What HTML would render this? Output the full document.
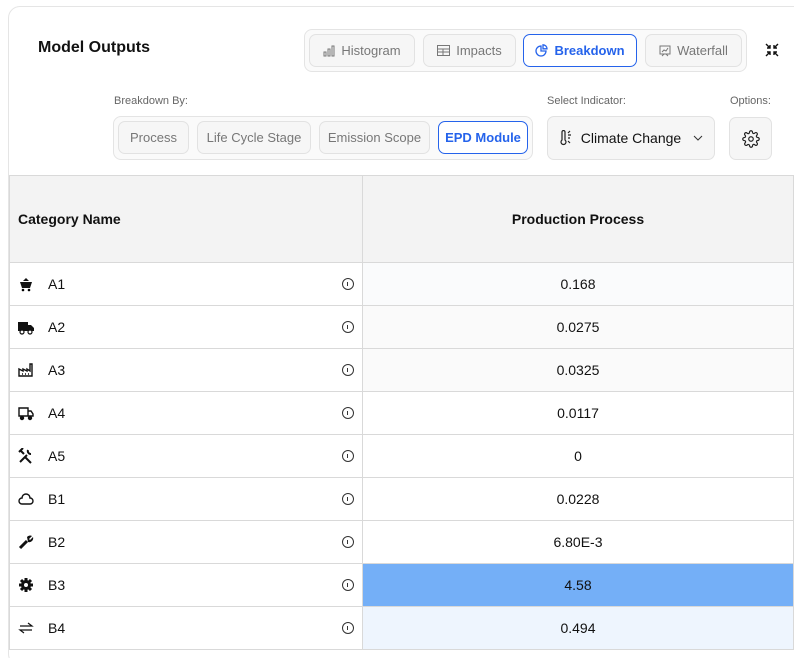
<!DOCTYPE html>
<html><head><meta charset="utf-8"><style>
*{box-sizing:border-box;margin:0;padding:0}
html,body{width:794px;height:658px;overflow:hidden}
body{background:#fff;font-family:"Liberation Sans",Arial,sans-serif;color:#111;position:relative}
.card{position:absolute;left:8px;top:6px;width:800px;height:660px;border:1px solid #e5e5e5;border-radius:12px}
.abs{position:absolute}
.title{left:38px;top:39px;font-size:16px;font-weight:bold}
.grp{border:1px solid #e4e4e4;border-radius:8px;background:#fafafa}
.btn{position:absolute;border:1px solid #e2e2e2;border-radius:7px;background:#f6f6f6;color:#777;font-size:13px;display:flex;align-items:center;justify-content:center;gap:6px}
.btn.act{border-color:#2563eb;background:#fff;color:#2563eb;font-weight:bold}
.lbl{font-size:11px;color:#666}
table{position:absolute;left:9px;top:175px;width:785px;border-collapse:collapse;font-size:14px}
td,th{border:1px solid #d9d9d9;height:43px;padding:0}
th{height:87px;background:#f3f3f3;font-weight:bold;font-size:14px}
th:first-child{text-align:left;padding-left:8px}
td:first-child{width:353px;padding-left:8px;position:relative}
td:first-child div{display:flex;align-items:center;height:42px}
td:last-child{text-align:center}
.ic{width:16px;height:16px;margin-right:14px}
.info{position:absolute;right:8px;top:15px;width:12px;height:12px;border:1.3px solid #333;border-radius:50%}
.info:after{content:"";position:absolute;left:4px;top:3px;width:1.3px;height:4px;background:#333}
</style></head><body>
<div class="card"></div>
<div class="abs title">Model Outputs</div>
<div class="abs grp" style="left:304px;top:29px;width:443px;height:43px"></div>
<div class="btn" style="left:309px;top:34px;width:106px;height:33px"><svg width="12" height="12" viewBox="0 0 12 12" fill="none" stroke="#777"><rect x="1" y="7" width="2" height="4"/><rect x="5" y="4" width="2" height="7"/><rect x="9" y="1" width="2" height="10"/></svg>Histogram</div>
<div class="btn" style="left:423px;top:34px;width:93px;height:33px"><svg width="13" height="11" viewBox="0 0 13 11" fill="none" stroke="#777"><rect x="0.5" y="0.5" width="12" height="10"/><path d="M1 4h11M1 7h11M6 4v7"/></svg>Impacts</div>
<div class="btn act" style="left:523px;top:34px;width:114px;height:33px"><svg width="13" height="13" viewBox="0 0 13 13" fill="none" stroke="#2563eb" stroke-width="1.3"><path d="M6 2a5 5 0 1 0 5 5H6z"/><path d="M8 0.8v4h4a4 4 0 0 0-4-4z"/></svg>Breakdown</div>
<div class="btn" style="left:645px;top:34px;width:97px;height:33px"><svg width="12" height="12" viewBox="0 0 12 12" fill="none" stroke="#777"><rect x="1" y="1" width="10" height="8"/><path d="M3 11l2-2M9 11l-2-2M3 7l2-2 2 1 2-3"/></svg>Waterfall</div>
<svg class="abs" style="left:765px;top:43px" width="14" height="14" viewBox="0 0 14 14" fill="none" stroke="#111" stroke-width="1.4"><path d="M1 1l4 4M5 2v3H2M13 1l-4 4M9 2v3h3M1 13l4-4M5 12V9H2M13 13l-4-4M9 12V9h3"/></svg>

<div class="abs lbl" style="left:114px;top:95px">Breakdown By:</div>
<div class="abs grp" style="left:113px;top:116px;width:420px;height:44px"></div>
<div class="btn" style="left:118px;top:121px;width:71px;height:33px">Process</div>
<div class="btn" style="left:197px;top:121px;width:114px;height:33px">Life Cycle Stage</div>
<div class="btn" style="left:319px;top:121px;width:111px;height:33px">Emission Scope</div>
<div class="btn act" style="left:438px;top:121px;width:90px;height:33px">EPD Module</div>

<div class="abs lbl" style="left:547px;top:95px">Select Indicator:</div>
<div class="btn" style="left:547px;top:116px;width:168px;height:44px;color:#111;font-size:14px;gap:8px"><svg width="14" height="16" viewBox="0 0 14 16" fill="none" stroke="#222" stroke-width="1.2"><path d="M3 2a1.5 1.5 0 0 1 3 0v8a2.5 2.5 0 1 1-3 0z"/><path d="M9 5h3M9 8h2M9 11l2 2M9 3l2-2"/></svg>Climate Change<svg width="10" height="6" viewBox="0 0 10 6" fill="none" stroke="#333" style="margin-left:4px"><path d="M1 1l4 4 4-4"/></svg></div>
<div class="abs lbl" style="left:730px;top:95px">Options:</div>
<div class="btn" style="left:729px;top:117px;width:43px;height:43px"><svg width="18" height="18" viewBox="0 0 24 24" fill="none" stroke="#222" stroke-width="1.6"><circle cx="12" cy="12" r="3"/><path d="M19.4 15a1.7 1.7 0 0 0 .3 1.8l.1.1a2 2 0 1 1-2.8 2.8l-.1-.1a1.7 1.7 0 0 0-1.8-.3 1.7 1.7 0 0 0-1 1.5V21a2 2 0 1 1-4 0v-.1a1.7 1.7 0 0 0-1.1-1.5 1.7 1.7 0 0 0-1.8.3l-.1.1a2 2 0 1 1-2.8-2.8l.1-.1a1.7 1.7 0 0 0 .3-1.8 1.7 1.7 0 0 0-1.5-1H3a2 2 0 1 1 0-4h.1a1.7 1.7 0 0 0 1.5-1.1 1.7 1.7 0 0 0-.3-1.8l-.1-.1a2 2 0 1 1 2.8-2.8l.1.1a1.7 1.7 0 0 0 1.800.3H9a1.7 1.7 0 0 0 1-1.5V3a2 2 0 1 1 4 0v.1a1.7 1.7 0 0 0 1 1.5 1.7 1.7 0 0 0 1.8-.3l.1-.1a2 2 0 1 1 2.8 2.8l-.1.1a1.7 1.7 0 0 0-.3 1.8V9a1.7 1.7 0 0 0 1.5 1H21a2 2 0 1 1 0 4h-.1a1.7 1.7 0 0 0-1.5 1z"/></svg></div>

<table>
<tr><th>Category Name</th><th>Production Process</th></tr>
<tr><td><div><svg class="ic" viewBox="0 0 16 16"><path d="M2 6h12l-2 6H4z" fill="#111"/><circle cx="5" cy="14" r="1.3"/><circle cx="11" cy="14" r="1.3"/><path d="M5 5l3-3 3 3" fill="#111"/></svg>A1</div><span class="info"></span></td><td style="background:#fafbfc">0.168</td></tr>
<tr><td><div><svg class="ic" viewBox="0 0 16 16"><rect x="0" y="3" width="10" height="9" fill="#111"/><path d="M10 6h3l3 3v3h-6z" fill="#111"/><circle cx="4" cy="13" r="2" fill="#fff" stroke="#111" stroke-width="1.2"/><circle cx="12" cy="13" r="2" fill="#fff" stroke="#111" stroke-width="1.2"/></svg>A2</div><span class="info"></span></td><td style="background:#fafafa">0.0275</td></tr>
<tr><td><div><svg class="ic" viewBox="0 0 16 16" fill="none" stroke="#111" stroke-width="1.4"><path d="M1 14V7l4 2V7l4 2V7l3 2V2h2v12z"/><path d="M4 12h1M7 12h1M10 12h1"/></svg>A3</div><span class="info"></span></td><td style="background:#fafafa">0.0325</td></tr>
<tr><td><div><svg class="ic" viewBox="0 0 16 16" fill="none" stroke="#111" stroke-width="1.4"><path d="M1 3h9v8H1zM10 6h3l2 3v2h-5"/><circle cx="4" cy="13" r="1.5" fill="#111"/><circle cx="12" cy="13" r="1.5" fill="#111"/></svg>A4</div><span class="info"></span></td><td>0.0117</td></tr>
<tr><td><div><svg class="ic" viewBox="0 0 16 16" fill="none" stroke="#111" stroke-width="2"><path d="M2 14L9 7M3 3l3 3M1 4l4-4M7 9l6 6M10 2a3 3 0 0 0 3 4"/></svg>A5</div><span class="info"></span></td><td>0</td></tr>
<tr><td><div><svg class="ic" viewBox="0 0 16 16" fill="none" stroke="#111" stroke-width="1.4"><path d="M4 13a3 3 0 0 1 0-6 4 4 0 0 1 8 0 3 3 0 0 1 0 6z"/></svg>B1</div><span class="info"></span></td><td>0.0228</td></tr>
<tr><td><div><svg class="ic" viewBox="0 0 16 16"><path d="M2 14l7-7" stroke="#111" stroke-width="3"/><path d="M9 3a4 4 0 0 1 5-1l-3 3 1 1 3-3a4 4 0 0 1-5 5z" fill="#111"/></svg>B2</div><span class="info"></span></td><td>6.80E-3</td></tr>
<tr><td><div><svg class="ic" viewBox="0 0 16 16"><circle cx="8" cy="8" r="5" fill="#111"/><path d="M8 1v14M1 8h14M3 3l10 10M13 3L3 13" stroke="#111" stroke-width="3"/><circle cx="8" cy="8" r="2" fill="#fff"/></svg>B3</div><span class="info"></span></td><td style="background:#74aff7">4.58</td></tr>
<tr><td><div><svg class="ic" viewBox="0 0 16 16" fill="none" stroke="#111" stroke-width="1.2"><path d="M2 6h12L10 3M14 10H2l4 3"/></svg>B4</div><span class="info"></span></td><td style="background:#eef5fe">0.494</td></tr>
</table>
</body></html>
